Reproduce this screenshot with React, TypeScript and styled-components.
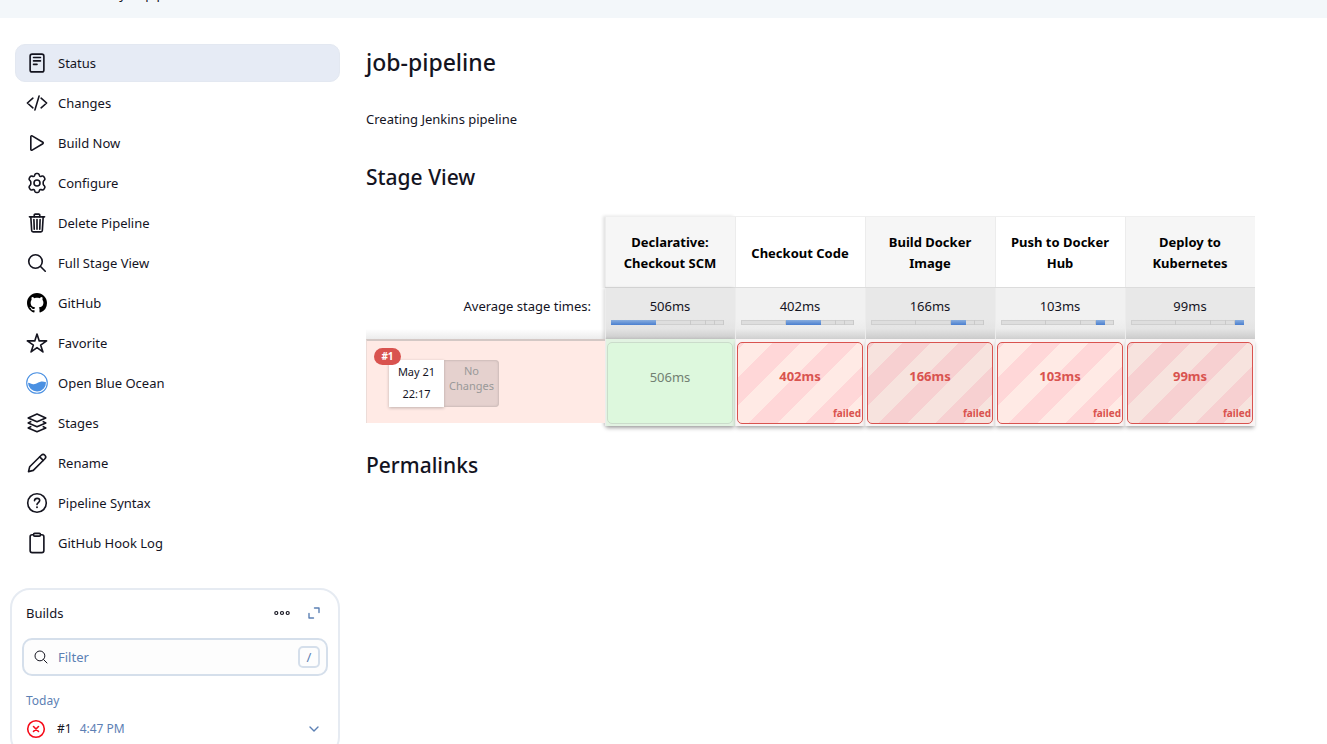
import React from "react";
import styled, { createGlobalStyle } from "styled-components";
import {
  IoReaderOutline,
  IoCodeSlashOutline,
  IoPlayOutline,
  IoTrashOutline,
  IoSearchOutline,
  IoStarOutline,
  IoClipboardOutline,
} from "react-icons/io5";

const ink = "#14141f";
const accent = "#5c80b4";
const danger = "#d9534f";

const GlobalStyle = createGlobalStyle`
  *, *::before, *::after { box-sizing: border-box; }
  html { scrollbar-width: none; }
  body {
    margin: 0;
    background: #fff;
    color: ${ink};
    font: 400 13px/20px "Noto Sans", "Open Sans", sans-serif;
  }
  button, input { font: inherit; color: inherit; }
`;

const Header = styled.header`
  display: flex;
  align-items: flex-end;
  height: 18px;
  padding: 0 0 14px 20px;
  overflow: hidden;
  background: #f3f7fa;
`;

const Crumbs = styled.nav`
  display: flex;
  gap: 8px;
  a { color: inherit; text-decoration: none; }
`;

const Layout = styled.div`
  display: flex;
  align-items: flex-start;
  gap: 26px;
`;

const Sidebar = styled.aside`
  flex: 0 0 340px;
  padding: 26px 0 0 10px;
`;

const Tasks = styled.nav`
  display: flex;
  flex-direction: column;
  gap: 2px;
  padding-left: 5px;
`;

const Task = styled.a<{ $active?: boolean }>`
  display: flex;
  align-items: center;
  gap: 10px;
  height: 38px;
  padding: 0 10px;
  border-radius: 10px;
  border: 1px solid ${(p) => (p.$active ? "#e3e8f1" : "transparent")};
  background: ${(p) => (p.$active ? "#e6ebf5" : "transparent")};
  color: inherit;
  text-decoration: none;
  svg { flex: none; width: 22px; height: 22px; }
  svg[viewBox="0 0 512 512"] * { stroke-width: 38px; }
`;

const BuildsCard = styled.section`
  margin-top: 26px;
  padding: 10px 10px 11px;
  border: 2px solid #e6ebf2;
  border-radius: 20px;
`;

const CardHeader = styled.div`
  display: flex;
  align-items: center;
  height: 26px;
  padding: 0 4px;
  h2 { flex: 1; margin: 0; font-size: 13px; font-weight: 400; }
`;

const IconButton = styled.button`
  display: flex;
  align-items: center;
  justify-content: center;
  width: 20px;
  height: 20px;
  margin-left: 12px;
  padding: 0;
  border: 0;
  background: none;
  color: ${accent};
`;

const FilterBox = styled.label`
  display: flex;
  align-items: center;
  gap: 9px;
  height: 38px;
  margin-top: 12px;
  padding: 0 6px 0 9px;
  border: 2px solid #d5dfeb;
  border-radius: 10px;
  background: #fdfdfd;
  svg { flex: none; }
  input {
    flex: 1;
    min-width: 0;
    padding: 0;
    border: 0;
    outline: 0;
    background: none;
  }
  input::placeholder { color: ${accent}; opacity: 1; }
  kbd {
    width: 22px;
    height: 22px;
    border: 2px solid #d5dfeb;
    border-radius: 5px;
    color: ${accent};
    font: inherit;
    line-height: 18px;
    text-align: center;
  }
`;

const DayLabel = styled.p`
  margin: 15px 0 0;
  padding: 0 4px;
  color: ${accent};
  font-size: 12px;
`;

const BuildRow = styled.div`
  display: flex;
  align-items: center;
  height: 30px;
  margin-top: 3px;
  padding: 0 4px;
  font-size: 12px;
  a { flex: 1; display: flex; align-items: center; gap: 8px; color: inherit; text-decoration: none; }
  svg { flex: none; }
  a svg { margin-right: 3px; }
  time { color: ${accent}; }
`;

const Main = styled.main`
  flex: 1;
  min-width: 0;
  padding: 28px 20px 30px 0;
`;

const Title = styled.h1`
  margin: 0;
  font-size: 23px;
  font-weight: 500;
  line-height: 32px;
`;

const SectionTitle = styled.h2<{ $gap: number }>`
  margin: ${(p) => p.$gap}px 0 0;
  font-size: 21px;
  font-weight: 500;
  line-height: 30px;
`;

const Description = styled.p`
  margin: 31px 0 0;
`;

const StageTable = styled.table`
  margin-top: 24px;
  border-collapse: separate;
  border-spacing: 0;
  table-layout: fixed;
  width: 889px;
  th, td { padding: 0; }
`;

const InfoCol = styled.col`
  width: 239px;
`;

const edge = "inset 1px 0 #ececec";
const sideShadow = "-2px 0 3px rgba(0, 0, 0, 0.12)";

const StageHead = styled.th<{ $odd: boolean; $first: boolean }>`
  && { padding-top: 2px; }
  height: 72px;
  border-top: 1px solid #efefef;
  border-bottom: 1px solid #dcdcdc;
  background: ${(p) => (p.$odd ? "#f6f6f6" : "#fff")};
  box-shadow: ${(p) => (p.$first ? `${edge}, ${sideShadow}` : edge)};
  color: #000;
  font-weight: 700;
  line-height: 21px;
`;

const AverageLabel = styled.th`
  height: 51px;
  background: linear-gradient(#fff 80%, #ececec);
  font-weight: 400;
  text-align: right;
  vertical-align: top;
  span { display: block; padding: 8px 14px 0 0; }
`;

const AverageCell = styled.td<{ $odd: boolean; $first: boolean }>`
  background: ${(p) =>
    p.$odd
      ? "linear-gradient(#e8e8e8 60%, #e4e4e4 80%, #cbcbcb)"
      : "linear-gradient(#f1f1f1 60%, #ececec 80%, #d0d0d0)"};
  box-shadow: ${(p) => (p.$first ? `${edge}, ${sideShadow}` : edge)};
  text-align: center;
  vertical-align: top;
  span { display: block; padding-top: 8px; }
`;

const Timeline = styled.div`
  display: flex;
  height: 5px;
  margin: 4px 11px 0 6px;
  background: #dedede;
  box-shadow: inset 0 0 0 1px #cfcfcf;
`;

const Segment = styled.i<{ $on: boolean }>`
  box-shadow: ${(p) => (p.$on ? "none" : "inset -1px 0 #c9c9c9")};
  background: ${(p) => (p.$on ? "linear-gradient(#8aaede, #4a7fd0)" : "transparent")};
`;

const RunCell = styled.td`
  vertical-align: top;
`;

const RunInfo = styled.div`
  position: relative;
  display: flex;
  align-items: flex-start;
  height: 84px;
  padding: 19px 0 0 22px;
  border-top: 2px solid #d3c8c5;
  border-left: 1px solid #ecdcd8;
  background: #ffeae5;
`;

const RunBadge = styled.a`
  position: absolute;
  top: 7px;
  left: 7px;
  width: 27px;
  height: 17px;
  border-radius: 9px;
  background: ${danger};
  color: #fff;
  font-size: 10px;
  font-weight: 700;
  line-height: 17px;
  text-align: center;
  text-decoration: none;
`;

const RunDate = styled.div`
  width: 55px;
  height: 47px;
  padding-top: 1px;
  background: #fff;
  box-shadow: 0 1px 3px rgba(0, 0, 0, 0.25);
  font-size: 11px;
  line-height: 22px;
  text-align: center;
`;

const RunChanges = styled.div`
  width: 55px;
  height: 47px;
  padding-top: 3px;
  border-radius: 0 4px 4px 0;
  background: #e5d1ce;
  box-shadow: inset 0 0 2px 1px #cdbcb9;
  color: #999;
  font-size: 11px;
  line-height: 15px;
  text-align: center;
`;

const ResultCell = styled.td<{ $ok: boolean; $first: boolean }>`
  && { padding: 3px 2px 2px; }
  height: 87px;
  background: ${(p) => (p.$ok ? "#e2f3e2" : "#f8f4f4")};
  box-shadow: ${(p) =>
    `${edge}, 0 3px 4px -1px rgba(0, 0, 0, 0.35)${p.$first ? `, ${sideShadow}` : ""}`};
  vertical-align: top;
`;

const Result = styled.div<{ $ok: boolean; $odd: boolean }>`
  display: flex;
  align-items: center;
  justify-content: center;
  position: relative;
  height: 82px;
  border: 1px solid ${(p) => (p.$ok ? "#cbdccb" : danger)};
  border-radius: 5px;
  color: ${(p) => (p.$ok ? "#728072" : danger)};
  font-weight: ${(p) => (p.$ok ? 400 : 700)};
  padding-bottom: ${(p) => (p.$ok ? 12 : 14)}px;
  background: ${(p) => {
    if (p.$ok) return "#ddf8dd";
    const [light, dark] = p.$odd ? ["#f7e3de", "#f7d0d1"] : ["#ffeae5", "#ffd7d8"];
    return `repeating-linear-gradient(-45deg, ${light} 0 20px, ${dark} 20px 40px)`;
  }};
`;

const FailedTag = styled.small`
  position: absolute;
  right: 1px;
  bottom: 2px;
  font-size: 10px;
  line-height: 16px;
`;

const line = {
  fill: "none",
  stroke: "currentColor",
  strokeLinecap: "round" as const,
  strokeLinejoin: "round" as const,
};

const GearIcon = () => (
  <svg viewBox="0 0 22 22" {...line} strokeWidth="1.6">
    <path d="M8.800 2.700Q9.200 1.600 10.300 1.500h1.400q1.100.1 1.500 1.200l.3 1q.4.900 1.400.700l1.100-.3q1.200-.3 1.900.7l.8 1.300q.6 1-.2 1.900l-.7.8q-.6.700-.6 1.200v2q0 .5.600 1.200l.7.8q.8.900.2 1.900l-.8 1.300q-.7 1-1.900.7l-1.100-.3q-1-.2-1.400.7l-.3 1q-.4 1.100-1.500 1.200h-1.400q-1.100-.1-1.500-1.200l-.3-1q-.4-.9-1.400-.7l-1.100.3q-1.200.3-1.900-.7l-.8-1.300q-.6-1 .2-1.900l.7-.8q.6-.7.600-1.200v-2q0-.5-.6-1.200l-.7-.8q-.8-.9-.2-1.900l.8-1.300q.7-1 1.900-.7l1.100.3q1 .2 1.400-.7z" />
    <circle cx="11" cy="11" r="3" />
  </svg>
);

const HelpIcon = () => (
  <svg viewBox="0 0 22 22" {...line} strokeWidth="1.6">
    <circle cx="11" cy="11" r="9.3" />
    <path d="M8.500 8.700c.1-1.500 1.200-2.300 2.600-2.300s2.600.9 2.600 2.200c0 1.900-2.700 2-2.700 4" />
    <circle cx="11" cy="15.300" r=".4" fill="currentColor" strokeWidth="1.200" />
  </svg>
);

const GithubIcon = () => (
  <svg viewBox="-0.8 -0.8 17.6 17.6" fill="#000">
    <path d="M8 0C3.58 0 0 3.58 0 8c0 3.54 2.29 6.53 5.47 7.59.4.07.55-.17.55-.38 0-.19-.01-.82-.01-1.49-2.01.37-2.53-.49-2.69-.94-.09-.23-.48-.94-.82-1.13-.28-.15-.68-.52-.01-.53.63-.01 1.08.58 1.23.82.72 1.21 1.87.87 2.33.66.07-.52.28-.87.51-1.07-1.78-.2-3.64-.89-3.64-3.95 0-.87.31-1.59.82-2.15-.08-.2-.36-1.02.08-2.12 0 0 .67-.21 2.2.82.64-.18 1.32-.27 2-.27.68 0 1.36.09 2 .27 1.53-1.04 2.2-.82 2.2-.82.44 1.1.16 1.92.08 2.12.51.56.82 1.27.82 2.15 0 3.07-1.87 3.75-3.65 3.95.29.25.54.73.54 1.48 0 1.07-.01 1.93-.01 2.2 0 .21.15.46.55.38A8.013 8.013 0 0 0 16 8c0-4.42-3.58-8-8-8z" />
  </svg>
);

const BlueOceanIcon = () => (
  <svg viewBox="0 0 22 22">
    <circle cx="11" cy="11" r="10.3" fill="#fff" stroke="#4a90e2" strokeWidth="1.1" />
    <path
      d="M2 10.7c1.6 0 2.6.9 4.2 1.3 2.3.6 4-.2 5.7-1.2 2.2-1.3 4.4-2.1 8.1-.6A9 9 0 0 1 2 10.7z"
      fill="#4a90e2"
    />
  </svg>
);

const LayersIcon = () => (
  <svg viewBox="0 0 22 22" {...line} strokeWidth="1.6">
    <path d="M11 2l8.800 3.900L11 9.800 2.200 5.900z" />
    <path d="M4.700 9.700l-2.500 1.200L11 14.800l8.800-3.900-2.500-1.200" />
    <path d="M4.700 14.700l-2.500 1.200L11 19.800l8.800-3.900-2.500-1.200" />
  </svg>
);

const PencilIcon = () => (
  <svg viewBox="0 0 22 22" {...line} strokeWidth="1.6">
    <path d="M2.500 19.600l1.200-4.800L15.300 3.200a2.500 2.500 0 0 1 3.600 3.600L7.300 18.400z" />
    <path d="M13.700 4.900l3.500 3.500" />
  </svg>
);

const MoreIcon = () => (
  <svg width="16" height="6" viewBox="0 0 16 6" fill="none" stroke={ink} strokeWidth="1.2">
    <circle cx="2.3" cy="3" r="1.5" />
    <circle cx="8" cy="3" r="1.5" />
    <circle cx="13.7" cy="3" r="1.5" />
  </svg>
);

const ExpandIcon = () => (
  <svg width="12" height="12" viewBox="0 0 12 12" {...line} strokeWidth="1.4">
    <path d="M6.500 1H11v4.500M1 6.500V11h4.500" />
  </svg>
);

const FailedIcon = () => (
  <svg width="20" height="20" viewBox="0 0 20 20" fill="none" stroke="#f60c1a" strokeLinecap="round">
    <circle cx="10" cy="10" r="8.3" strokeWidth="1.6" />
    <path d="M7.500 7.500l5 5M12.500 7.500l-5 5" strokeWidth="1.6" />
  </svg>
);

const ChevronIcon = () => (
  <svg width="10" height="6" viewBox="0 0 10 6" {...line} strokeWidth="1.4">
    <path d="M1 1l4 4 4-4" />
  </svg>
);

const tasks: { label: string; icon: React.ReactNode }[] = [
  { label: "Status", icon: <IoReaderOutline /> },
  { label: "Changes", icon: <IoCodeSlashOutline /> },
  { label: "Build Now", icon: <IoPlayOutline /> },
  { label: "Configure", icon: <GearIcon /> },
  { label: "Delete Pipeline", icon: <IoTrashOutline /> },
  { label: "Full Stage View", icon: <IoSearchOutline /> },
  { label: "GitHub", icon: <GithubIcon /> },
  { label: "Favorite", icon: <IoStarOutline /> },
  { label: "Open Blue Ocean", icon: <BlueOceanIcon /> },
  { label: "Stages", icon: <LayersIcon /> },
  { label: "Rename", icon: <PencilIcon /> },
  { label: "Pipeline Syntax", icon: <HelpIcon /> },
  { label: "GitHub Hook Log", icon: <IoClipboardOutline /> },
];

const stages = [
  { name: ["Declarative:", "Checkout SCM"], ms: 506, ok: true },
  { name: ["Checkout Code"], ms: 402, ok: false },
  { name: ["Build Docker", "Image"], ms: 166, ok: false },
  { name: ["Push to Docker", "Hub"], ms: 103, ok: false },
  { name: ["Deploy to", "Kubernetes"], ms: 99, ok: false },
];

export default function App() {
  return (
    <>
      <GlobalStyle />
      <Header>
        <Crumbs aria-label="Breadcrumb">
          <a href="#dashboard">Dashboard</a>
          <span>›</span>
          <a href="#pipelines">My CI pipeline</a>
          <span>›</span>
        </Crumbs>
      </Header>
      <Layout>
        <Sidebar>
          <Tasks aria-label="Tasks">
            {tasks.map((t, i) => (
              <Task key={t.label} href="#" $active={i === 0}>
                {t.icon}
                {t.label}
              </Task>
            ))}
          </Tasks>
          <BuildsCard>
            <CardHeader>
              <h2>Builds</h2>
              <IconButton aria-label="More actions">
                <MoreIcon />
              </IconButton>
              <IconButton aria-label="Expand">
                <ExpandIcon />
              </IconButton>
            </CardHeader>
            <FilterBox>
              <IoSearchOutline size={16} />
              <input type="text" placeholder="Filter" aria-label="Filter builds" />
              <kbd>/</kbd>
            </FilterBox>
            <DayLabel>Today</DayLabel>
            <BuildRow>
              <a href="#1">
                <FailedIcon />
                <span>#1</span>
                <time>4:47 PM</time>
              </a>
              <IconButton aria-label="Build menu">
                <ChevronIcon />
              </IconButton>
            </BuildRow>
          </BuildsCard>
        </Sidebar>
        <Main>
          <Title>job-pipeline</Title>
          <Description>Creating Jenkins pipeline</Description>
          <SectionTitle $gap={33}>Stage View</SectionTitle>
          <StageTable>
            <colgroup>
              <InfoCol />
              {stages.map((s) => (
                <col key={s.ms} />
              ))}
            </colgroup>
            <thead>
              <tr>
                <td />
                {stages.map((s, i) => (
                  <StageHead key={s.ms} scope="col" $odd={i % 2 === 0} $first={i === 0}>
                    {s.name.map((part) => (
                      <div key={part}>{part}</div>
                    ))}
                  </StageHead>
                ))}
              </tr>
            </thead>
            <tbody>
              <tr>
                <AverageLabel scope="row">
                  <span>Average stage times:</span>
                </AverageLabel>
                {stages.map((s, i) => (
                  <AverageCell key={s.ms} $odd={i % 2 === 0} $first={i === 0}>
                    <span>{s.ms}ms</span>
                    <Timeline>
                      {stages.map((seg) => (
                        <Segment key={seg.ms} $on={seg === s} style={{ flex: `${seg.ms} 0 0px` }} />
                      ))}
                    </Timeline>
                  </AverageCell>
                ))}
              </tr>
              <tr>
                <RunCell>
                  <RunInfo>
                    <RunDate>
                      <div>May 21</div>
                      <div>22:17</div>
                    </RunDate>
                    <RunChanges>
                      No
                      <br />
                      Changes
                    </RunChanges>
                    <RunBadge href="#1">#1</RunBadge>
                  </RunInfo>
                </RunCell>
                {stages.map((s, i) => (
                  <ResultCell key={s.ms} $ok={s.ok} $first={i === 0}>
                    <Result $ok={s.ok} $odd={i % 2 === 0}>
                      {s.ms}ms
                      {!s.ok && <FailedTag>failed</FailedTag>}
                    </Result>
                  </ResultCell>
                ))}
              </tr>
            </tbody>
          </StageTable>
          <SectionTitle $gap={24}>Permalinks</SectionTitle>
        </Main>
      </Layout>
    </>
  );
}
